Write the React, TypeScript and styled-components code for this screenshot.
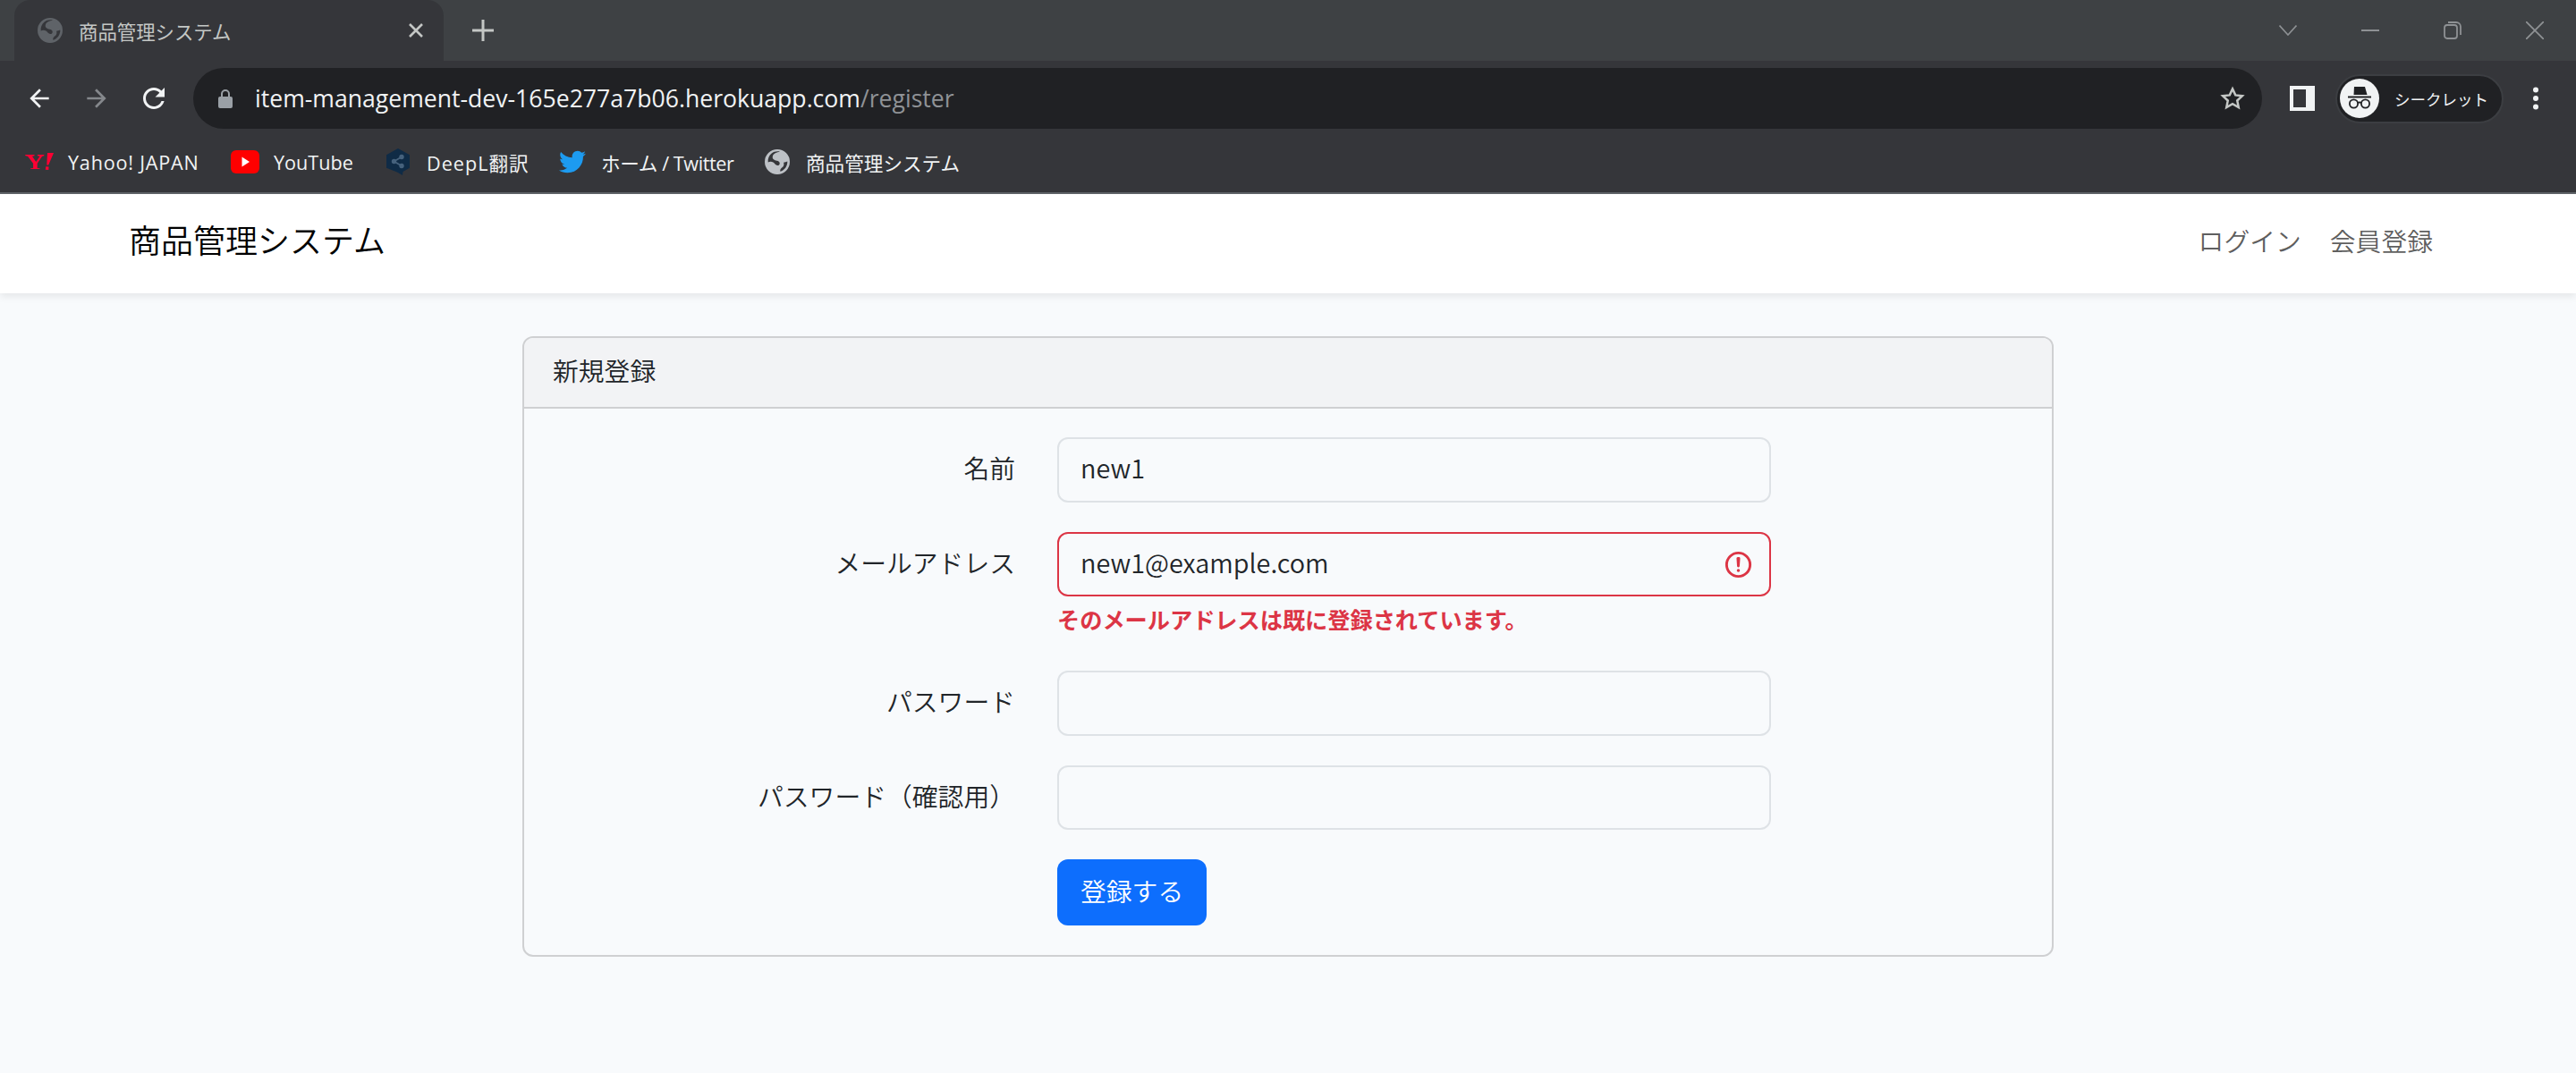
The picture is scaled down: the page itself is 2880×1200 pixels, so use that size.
import React from 'react';
import styled, { createGlobalStyle } from 'styled-components';
import { FaTwitter } from 'react-icons/fa';

const GlobalStyle = createGlobalStyle`
  html, body {
    margin: 0;
    background: #f8fafc;
  }
  * {
    box-sizing: border-box;
  }
`;

const chromeFont = `"Open Sans", "Noto Sans CJK JP", sans-serif`;
const pageFont = `"Noto Sans CJK JP", "Noto Sans", sans-serif`;

/* browser chrome */
const Browser = styled.div`
  width: 2880px;
  font-family: ${chromeFont};
  color: #fff;
`;

const TabStrip = styled.div`
  display: flex;
  align-items: stretch;
  height: 68px;
  padding-left: 16px;
  background: #3e4144;
`;

const Tab = styled.div`
  display: flex;
  align-items: center;
  width: 480px;
  padding: 0 22px 0 26px;
  gap: 18px;
  background: #35363a;
  border-radius: 18px 18px 0 0;
  font-size: 21.4px;
  color: #c4c7c5;
`;

const TabTitle = styled.span`
  flex: 1;
`;

const NewTab = styled.div`
  display: flex;
  align-items: center;
  margin-left: 32px;
`;

const WindowControls = styled.div`
  display: flex;
  align-items: center;
  margin-left: auto;
  padding-right: 28px;
  gap: 56px;
`;

const WindowIcon = styled.div`
  display: flex;
  width: 36px;
  justify-content: center;
`;

const Toolbar = styled.div`
  display: flex;
  align-items: center;
  height: 84px;
  padding: 0 12px;
  background: #35363a;
`;

const NavButton = styled.div`
  display: flex;
  justify-content: center;
  align-items: center;
  width: 64px;
  height: 64px;
`;

const AddressBar = styled.div`
  display: flex;
  align-items: center;
  width: 2313px;
  height: 68px;
  margin-left: 12px;
  padding: 0 18px 0 28px;
  border-radius: 34px;
  background: #202124;
  font-size: 26.6px;
`;

const Url = styled.div`
  flex: 1;
  margin-left: 25px;
  white-space: nowrap;
  color: #f1f3f4;
`;

const UrlPath = styled.span`
  color: #8f9296;
`;

const SidePanel = styled.div`
  display: flex;
  margin-left: 31px;
`;

const ProfilePill = styled.div`
  display: flex;
  align-items: center;
  width: 188px;
  height: 55px;
  margin-left: 23px;
  padding-left: 3px;
  gap: 17px;
  border: 2px solid #3c3e42;
  border-radius: 28px;
  background: #202124;
  font-size: 17.5px;
  color: #f1f3f4;
  white-space: nowrap;
`;

const Avatar = styled.div`
  display: flex;
  justify-content: center;
  align-items: center;
  width: 44px;
  height: 44px;
  border-radius: 50%;
  background: #f1f3f4;
`;

const MenuDots = styled.div`
  display: flex;
  margin-left: 32px;
`;

const Bookmarks = styled.div`
  display: flex;
  align-items: center;
  height: 65px;
  padding: 0 0 5px 28px;
  background: #35363a;
  border-bottom: 2px solid #5f6368;
  font-size: 21.6px;
  color: #f1f3f4;
`;

const Bookmark = styled.div<{ $width?: number; $tracking?: number }>`
  display: flex;
  align-items: center;
  flex: none;
  width: ${(p) => (p.$width ? `${p.$width}px` : 'auto')};
  gap: 16px;
  letter-spacing: ${(p) => p.$tracking ?? 0}px;
  white-space: nowrap;
`;

const BookmarkIcon = styled.div`
  display: flex;
  justify-content: center;
  align-items: center;
  width: 32px;
  height: 32px;
`;

/* page */
const Navbar = styled.nav`
  display: flex;
  align-items: center;
  justify-content: space-between;
  height: 111px;
  padding: 0 160px 8px 144px;
  background: #fff;
  box-shadow: 0 4px 8px rgba(0, 0, 0, 0.075);
  font-family: ${pageFont};
  font-weight: 350;
`;

const Brand = styled.div`
  padding-bottom: 4px;
  font-size: 36px;
  color: #000;
`;

const NavLinks = styled.div`
  display: flex;
  gap: 32px;
`;

const NavLink = styled.a`
  font-size: 28.8px;
  color: rgba(0, 0, 0, 0.65);
`;

const Main = styled.main`
  display: flex;
  justify-content: center;
  padding-top: 48px;
  font-family: ${pageFont};
  font-size: 28.8px;
  font-weight: 350;
  color: #212529;
`;

const Card = styled.section`
  width: 1712px;
  border: 2px solid #cfd0d2;
  border-radius: 12px;
  overflow: hidden;
`;

const CardHeader = styled.header`
  display: flex;
  align-items: center;
  height: 79px;
  padding: 0 32px 6px;
  background: #f2f3f5;
  border-bottom: 2px solid #cfd0d2;
`;

const CardBody = styled.div`
  display: flex;
  flex-direction: column;
  padding: 32px 0 33px 0;
  gap: 33px;
`;

const FormRow = styled.div`
  display: grid;
  grid-template-columns: 549px 798px;
  column-gap: 47px;
  align-items: start;
`;

const Label = styled.label`
  height: 72px;
  line-height: 67px;
  text-align: right;
`;

const Field = styled.div`
  position: relative;
`;

const Input = styled.input<{ $invalid?: boolean }>`
  display: block;
  width: 100%;
  height: 72.5px;
  padding: 0 24px 5px;
  background: #f8fafc;
  border: 2px solid ${(p) => (p.$invalid ? '#dc3545' : '#dee2e6')};
  border-radius: 12px;
  outline: none;
  font-family: ${pageFont};
  font-size: 28.8px;
  font-weight: 350;
  color: #212529;
`;

const InvalidIcon = styled.svg`
  position: absolute;
  top: 19px;
  right: 19px;
`;

const Feedback = styled.div`
  margin-top: 7px;
  margin-bottom: 6px;
  font-size: 25.2px;
  line-height: 37px;
  font-weight: 700;
  color: #dc3545;
`;

const SubmitButton = styled.button`
  height: 74px;
  padding: 0 26px 6px;
  border: none;
  border-radius: 12px;
  background: #0d6efd;
  font-family: ${pageFont};
  font-size: 28.8px;
  font-weight: 350;
  color: #fff;
`;

const Globe = ({ color, size = 28 }: { color: string; size?: number }) => (
  <svg width={size} height={size} viewBox="0 0 28 28">
    <path
      fill={color}
      fillRule="evenodd"
      d="M14 0a14 14 0 1 0 0 28 14 14 0 0 0 0-28zM17 2.600c-3.500 1-7.500 1.900-8.200 5.400-.6 3 2.200 4.300 4.600 4.700 2 .3 3.300 1.300 3.300 3 0 1.500-1 2.300-2.600 2.300-1.900-.1-2.800-2-4.700-3.400-1.700-1.200-4-1.100-5.700-.1-.5-4 1-7.800 4-10.100 2.500-1.900 6-2.800 9.300-1.800zM25.300 13.500c.3 5.400-3.300 10-8 11.300-.3-2 .7-3.600 2.500-4.800 1.700-1.200 1.900-3.600 1.300-5.300 1.300-.2 2.900-.6 4.200-1.200z"
    />
  </svg>
);

const YahooLogo = () => (
  <svg width="32" height="21" viewBox="0 0 32 21">
    <path
      fill="#ff0033"
      d="M0 2h10.500v1.300L8 3.700l4.300 6.400 4.200-6.400-2.600-.4V2h7.400v1.300l-2.200.4-5.400 8v5.200l2.800.4V18H6.200v-.7l2.900-.4v-5.200L3 3.700.6 3.300zM25 0h7l-5.800 13.500h-1.900zM23.300 15.200l3.200.2-.2 3.600-3.500-.3z"
    />
  </svg>
);

const YoutubeLogo = () => (
  <svg width="32" height="26" viewBox="0 0 32 26">
    <rect width="32" height="26" rx="6" fill="#ff0000" />
    <path d="M12.500 7.500 21 13l-8.500 5.500z" fill="#fff" />
  </svg>
);

const DeeplLogo = () => (
  <svg width="26" height="30" viewBox="0 0 26 30">
    <path fill="#0f2b46" d="M13 0l13 7.200v14.500l-7.500 4.300L18 30l-6-3.400-12-4.900V7.200z" />
    <g stroke="#46627d" strokeWidth="1.800" fill="#46627d">
      <path d="M8.500 14.500 17 9.500M8.500 14.500 17 19.500" fill="none" />
      <circle cx="8.500" cy="14.500" r="1.800" />
      <circle cx="17" cy="9.500" r="1.800" />
      <circle cx="17" cy="19.500" r="1.800" />
    </g>
  </svg>
);

export default function App() {
  return (
    <>
      <GlobalStyle />
      <Browser>
        <TabStrip>
          <Tab>
            <Globe color="#5f6368" />
            <TabTitle>商品管理システム</TabTitle>
            <svg width="18" height="18" viewBox="0 0 18 18">
              <path d="M2 2l14 14M16 2 2 16" stroke="#c4c7c5" strokeWidth="2.600" />
            </svg>
          </Tab>
          <NewTab>
            <svg width="24" height="24" viewBox="0 0 24 24">
              <path d="M12 0v24M0 12h24" stroke="#c4c7c5" strokeWidth="3" />
            </svg>
          </NewTab>
          <WindowControls>
            <WindowIcon>
              <svg width="20" height="12" viewBox="0 0 20 12">
                <path d="M.5.5l9.500 10.500L19.500.5" fill="none" stroke="#8e9194" strokeWidth="1.600" />
              </svg>
            </WindowIcon>
            <WindowIcon>
              <svg width="20" height="4" viewBox="0 0 20 4">
                <path d="M0 2h20" stroke="#8e9194" strokeWidth="2" />
              </svg>
            </WindowIcon>
            <WindowIcon>
              <svg width="20" height="20" viewBox="0 0 20 20">
                <rect x="1" y="4" width="14" height="15" rx="3" fill="none" stroke="#8e9194" strokeWidth="1.800" />
                <path d="M5 1h9a5 5 0 0 1 5 5v9" fill="none" stroke="#8e9194" strokeWidth="1.800" />
              </svg>
            </WindowIcon>
            <WindowIcon>
              <svg width="20" height="20" viewBox="0 0 20 20">
                <path d="M0 0l20 20M20 0 0 20" stroke="#8e9194" strokeWidth="1.800" />
              </svg>
            </WindowIcon>
          </WindowControls>
        </TabStrip>

        <Toolbar>
          <NavButton>
            <svg width="32" height="32" viewBox="0 0 24 24">
              <path fill="#f1f3f4" d="M20 11H7.830l5.590-5.590L12 4l-8 8 8 8 1.410-1.410L7.830 13H20v-2z" />
            </svg>
          </NavButton>
          <NavButton>
            <svg width="32" height="32" viewBox="0 0 24 24">
              <path fill="#85888c" d="M4 11h12.170l-5.590-5.590L12 4l8 8-8 8-1.410-1.410L16.170 13H4v-2z" />
            </svg>
          </NavButton>
          <NavButton>
            <svg width="36" height="36" viewBox="0 0 24 24">
              <path
                fill="#f1f3f4"
                d="M17.650 6.350C16.200 4.900 14.210 4 12 4c-4.420 0-7.990 3.580-7.990 8s3.570 8 7.990 8c3.730 0 6.840-2.550 7.730-6h-2.080c-.82 2.330-3.040 4-5.650 4-3.310 0-6-2.690-6-6s2.690-6 6-6c1.660 0 3.140.69 4.220 1.780L13 11h7V4l-2.350 2.350z"
              />
            </svg>
          </NavButton>
          <AddressBar>
            <svg width="16" height="21" viewBox="0 0 16 21">
              <path
                fill="#9aa0a6"
                d="M2 8h1V5a5 5 0 0 1 10 0v3h1a2 2 0 0 1 2 2v9a2 2 0 0 1-2 2H2a2 2 0 0 1-2-2v-9a2 2 0 0 1 2-2zm3 0h6V5a3 3 0 0 0-6 0z"
              />
            </svg>
            <Url>
              item-management-dev-165e277a7b06.herokuapp.com<UrlPath>/register</UrlPath>
            </Url>
            <svg width="30" height="30" viewBox="0 0 24 24">
              <path
                fill="none"
                stroke="#c4c7c5"
                strokeWidth="2"
                d="M12 3.500l2.600 5.600 6.100.7-4.500 4.200 1.200 6L12 17l-5.400 3 1.200-6-4.500-4.200 6.100-.7z"
              />
            </svg>
          </AddressBar>
          <SidePanel>
            <svg width="28" height="28" viewBox="0 0 28 28">
              <rect width="28" height="28" fill="#f1f3f4" />
              <rect x="4" y="4" width="14" height="20" fill="#35363a" />
            </svg>
          </SidePanel>
          <ProfilePill>
            <Avatar>
              <svg width="32" height="32" viewBox="0 0 32 32">
                <path fill="#202124" d="M10 3h12l2.500 9h-15z" />
                <path stroke="#202124" strokeWidth="2" d="M3 14.500h26" />
                <circle cx="9.500" cy="22" r="4.600" fill="none" stroke="#202124" strokeWidth="1.800" />
                <circle cx="22.500" cy="22" r="4.600" fill="none" stroke="#202124" strokeWidth="1.800" />
                <path stroke="#202124" strokeWidth="1.800" fill="none" d="M14 21q2-1 4 0" />
              </svg>
            </Avatar>
            シークレット
          </ProfilePill>
          <MenuDots>
            <svg width="8" height="26" viewBox="0 0 8 26">
              <circle cx="4" cy="3.500" r="3" fill="#f1f3f4" />
              <circle cx="4" cy="13" r="3" fill="#f1f3f4" />
              <circle cx="4" cy="22.500" r="3" fill="#f1f3f4" />
            </svg>
          </MenuDots>
        </Toolbar>

        <Bookmarks>
          <Bookmark $width={230} $tracking={0.8}>
            <BookmarkIcon>
              <YahooLogo />
            </BookmarkIcon>
            Yahoo! JAPAN
          </Bookmark>
          <Bookmark $width={171}>
            <BookmarkIcon>
              <YoutubeLogo />
            </BookmarkIcon>
            YouTube
          </Bookmark>
          <Bookmark $width={195} $tracking={1}>
            <BookmarkIcon>
              <DeeplLogo />
            </BookmarkIcon>
            DeepL翻訳
          </Bookmark>
          <Bookmark $width={229} $tracking={-0.4}>
            <BookmarkIcon>
              <FaTwitter size={30} color="#1d9bf0" />
            </BookmarkIcon>
            ホーム / Twitter
          </Bookmark>
          <Bookmark>
            <BookmarkIcon>
              <Globe color="#bdc1c6" />
            </BookmarkIcon>
            商品管理システム
          </Bookmark>
        </Bookmarks>
      </Browser>

      <Navbar>
        <Brand>商品管理システム</Brand>
        <NavLinks>
          <NavLink>ログイン</NavLink>
          <NavLink>会員登録</NavLink>
        </NavLinks>
      </Navbar>

      <Main>
        <Card>
          <CardHeader>新規登録</CardHeader>
          <CardBody>
            <FormRow>
              <Label>名前</Label>
              <Field>
                <Input readOnly value="new1" />
              </Field>
            </FormRow>
            <FormRow>
              <Label>メールアドレス</Label>
              <Field>
                <Input $invalid readOnly value="new1@example.com" />
                <InvalidIcon width="35" height="35" viewBox="0 0 12 12" fill="none" stroke="#dc3545">
                  <circle cx="6" cy="6" r="4.500" />
                  <path strokeLinejoin="round" d="M5.800 3.600h.4L6 6.500z" />
                  <circle cx="6" cy="8.200" r=".6" fill="#dc3545" stroke="none" />
                </InvalidIcon>
                <Feedback>そのメールアドレスは既に登録されています。</Feedback>
              </Field>
            </FormRow>
            <FormRow>
              <Label>パスワード</Label>
              <Field>
                <Input readOnly type="password" />
              </Field>
            </FormRow>
            <FormRow>
              <Label>パスワード（確認用）</Label>
              <Field>
                <Input readOnly type="password" />
              </Field>
            </FormRow>
            <FormRow>
              <span />
              <Field>
                <SubmitButton>登録する</SubmitButton>
              </Field>
            </FormRow>
          </CardBody>
        </Card>
      </Main>
    </>
  );
}
